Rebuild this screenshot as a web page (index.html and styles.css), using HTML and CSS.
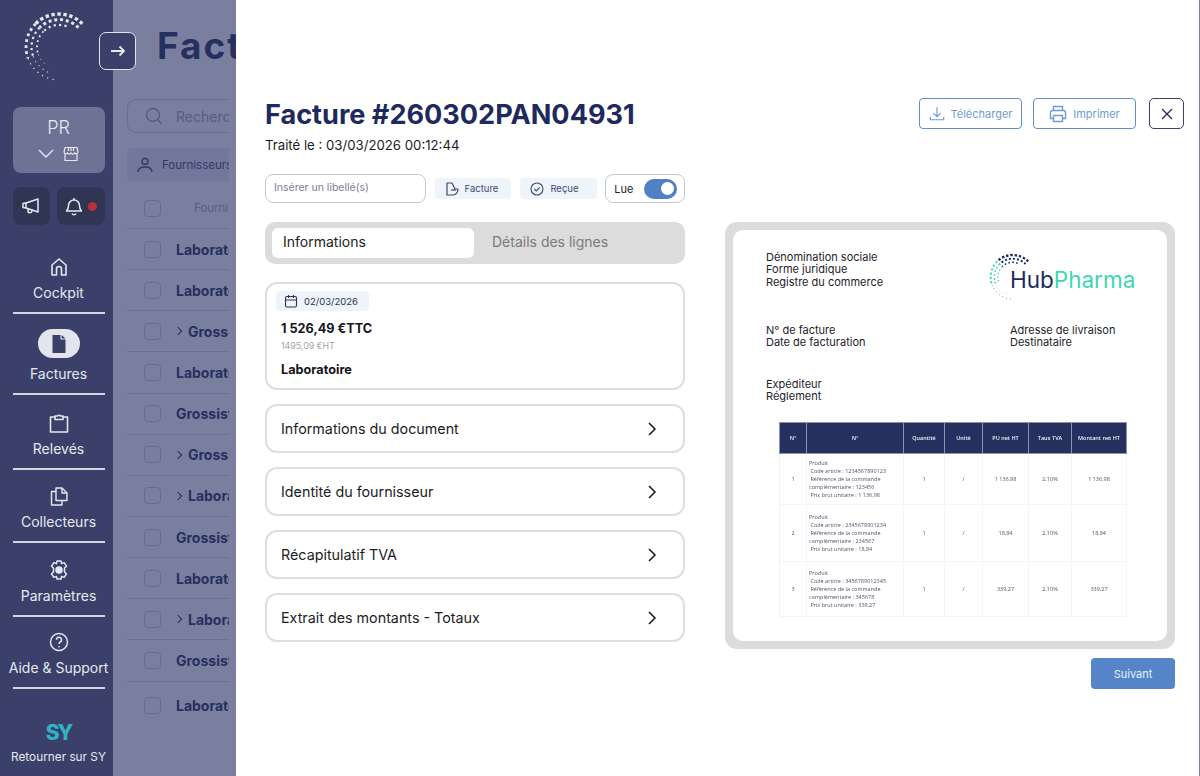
FILE: index.html
```html
<!DOCTYPE html>
<html lang="fr">
<head>
    <meta charset="utf-8">
    <title>Facture #260302PAN04931</title>
    <link rel="stylesheet" href="styles.css">
</head>
<body>
    <div class="app">
        <!-- Sidebar -->
        <aside class="sidebar">
            <svg class="brand-logo" viewBox="0 0 66 74" fill="none" stroke="#e6e8f0">
                <path d="M60.3 13.7A33 33 0 0 0 13.7 13.7" stroke-width="3.4" stroke-dasharray="3.4 2.6"/>
                <path d="M13.7 13.7A33 33 0 0 0 6 48.3" stroke-width="2.8" stroke-dasharray="2.8 3.2"/>
                <path d="M6 48.3A33 33 0 0 0 34.1 69.9" stroke-width="1.2" stroke-dasharray="1.2 4.4"/>
                <path d="M56.4 17.6A27.5 27.5 0 0 0 17.6 17.6" stroke-width="3" stroke-dasharray="3 2.8"/>
                <path d="M17.6 17.6A27.5 27.5 0 0 0 11.2 46.4" stroke-width="2.2" stroke-dasharray="2.2 3.4"/>
                <path d="M11.2 46.4A27.5 27.5 0 0 0 27.6 62.8" stroke-width="1.1" stroke-dasharray="1.1 4.2"/>
                <path d="M44.5 16.3A22 22 0 0 0 21.4 21.4" stroke-width="2.2" stroke-dasharray="2.2 3.2"/>
                <path d="M21.4 21.4A22 22 0 0 0 16.3 44.5" stroke-width="1.8" stroke-dasharray="1.8 3.4"/>
                <path d="M16.3 44.5A22 22 0 0 0 24.4 55" stroke-width="1" stroke-dasharray="1 4"/>
            </svg>

            <div class="account">
                <span class="account-initials">PR</span>
                <div class="account-icons">
                    <svg class="icon-16" viewBox="0 0 16 16" fill="none" stroke="currentColor" stroke-width="1.4"><path d="M1 4l7 7 7-7"/></svg>
                    <svg class="icon-16" viewBox="0 0 16 16" fill="none" stroke="currentColor" stroke-width="1.2"><path d="M1 6l1-4.5h12L15 6a2 2 0 0 1-3.5 1 2 2 0 0 1-3.5 0 2 2 0 0 1-3.5 0A2 2 0 0 1 1 6z"/><path d="M2 7.5V14.5h12V7.5M5.5 2v3M8 2v3M10.5 2v3"/></svg>
                </div>
            </div>

            <div class="quick-actions">
                <button type="button" class="quick-btn quick-btn-small">
                    <svg class="icon-20" viewBox="0 0 20 20" fill="none" stroke="currentColor" stroke-width="1.5" stroke-linejoin="round"><path d="M2 7.5v4l3 .5V7z"/><path d="M5 7l12-4v13L5 12"/><path d="M7 12.5v2a2 2 0 0 0 4 .5v-1.500"/></svg>
                </button>
                <button type="button" class="quick-btn quick-btn-wide">
                    <svg class="icon-20" viewBox="0 0 20 20" fill="none" stroke="currentColor" stroke-width="1.5" stroke-linejoin="round"><path d="M2.500 15c1.500-1.500 2-3 2-5.500a5.500 5.500 0 0 1 11 0c0 2.500.5 4 2 5.500z"/><path d="M8 17.500a2.200 2.200 0 0 0 4 0M10 2v2"/></svg>
                    <span class="alert-dot"></span>
                </button>
            </div>

            <nav class="nav">
                <a class="nav-item">
                    <svg class="icon-20" viewBox="0 0 20 20" fill="none" stroke="currentColor" stroke-width="1.6" stroke-linejoin="round"><path d="M3 18V8l7-6 7 6v10h-4.500v-6a2.500 2.500 0 0 0-5 0v6z"/></svg>
                    <span>Cockpit</span>
                </a>
                <a class="nav-item">
                    <span class="nav-pill">
                        <svg class="icon-20" viewBox="0 0 20 20" fill="#3a4069"><path d="M3.500 1h8v4.500h5V19h-13z"/><path d="M12.700 1l3.800 3.400h-3.800z"/></svg>
                    </span>
                    <span>Factures</span>
                </a>
                <a class="nav-item">
                    <svg class="icon-20" viewBox="0 0 20 20" fill="none" stroke="currentColor" stroke-width="1.6" stroke-linejoin="round"><path d="M6 4H1.500v15h17V4H14"/><path d="M6 6.500V3h2.800a1.300 1.300 0 0 1 2.400 0H14v3.500z"/></svg>
                    <span>Relevés</span>
                </a>
                <a class="nav-item">
                    <svg class="icon-20" viewBox="0 0 20 20" fill="none" stroke="currentColor" stroke-width="1.4" stroke-linejoin="round"><path d="M7 14.500V2h6l5 5v7.500z"/><path d="M13 2v5h5"/><path d="M7 5.500H2.500V19H13v-4.500"/></svg>
                    <span>Collecteurs</span>
                </a>
                <a class="nav-item">
                    <svg class="icon-20" viewBox="0 0 20 20" fill="none" stroke="currentColor" stroke-width="1.5" stroke-linejoin="round"><path d="M8 1h4l.6 2.600 2.500-1 2.400 3.600-2 1.800v4l2 1.800-2.400 3.600-2.500-1L12 19H8l-.6-2.600-2.500 1-2.400-3.600 2-1.800V8l-2-1.800 2.400-3.600 2.500 1z"/><circle cx="10" cy="10" r="3" fill="currentColor"/></svg>
                    <span>Paramètres</span>
                </a>
                <a class="nav-item">
                    <svg class="icon-20" viewBox="0 0 20 20" fill="none" stroke="currentColor" stroke-width="1.5"><circle cx="10" cy="10" r="8.500"/><path d="M7.500 7.800a2.500 2.500 0 1 1 3.700 2.200c-.8.500-1.200 1-1.200 2"/><path d="M10 14v1.200"/></svg>
                    <span>Aide &amp; Support</span>
                </a>
            </nav>

            <a class="back-link">
                <span class="sy-logo">SY</span>
                <span>Retourner sur SY</span>
            </a>
        </aside>

        <button type="button" class="expand-btn">
            <svg viewBox="0 0 16 16" width="16" height="16" fill="none" stroke="currentColor" stroke-width="1.8"><path d="M1 8h13M9.500 3.500L14 8l-4.500 4.500"/></svg>
        </button>

        <!-- Invoice list behind the panel -->
        <main class="list-page">
            <h2 class="list-title">Factures</h2>
            <div class="list-body">
                <div class="search">
                    <svg viewBox="0 0 20 20" width="20" height="20" fill="none" stroke="currentColor" stroke-width="1.4"><circle cx="9" cy="9" r="6.500"/><path d="M13.800 13.800L18 18"/></svg>
                    <span>Rechercher</span>
                </div>
                <div class="filter-chip">
                    <svg viewBox="0 0 18 18" width="18" height="18" fill="none" stroke="currentColor" stroke-width="1.4"><circle cx="9" cy="5.500" r="3"/><path d="M2 16c0-3.500 3-5 7-5s7 1.500 7 5"/></svg>
                    <span>Fournisseurs</span>
                </div>
                <div class="row row-head"><span class="checkbox"></span><span class="col-head">Fournisseur</span></div>
                <div class="row"><span class="checkbox"></span><b>Laboratoire</b></div>
                <div class="row"><span class="checkbox"></span><b>Laboratoire</b></div>
                <div class="row"><span class="checkbox"></span><i class="caret"></i><b>Grossiste</b></div>
                <div class="row"><span class="checkbox"></span><b>Laboratoire</b></div>
                <div class="row"><span class="checkbox"></span><b>Grossiste</b></div>
                <div class="row"><span class="checkbox"></span><i class="caret"></i><b>Grossiste</b></div>
                <div class="row"><span class="checkbox"></span><i class="caret"></i><b>Laboratoire</b></div>
                <div class="row"><span class="checkbox"></span><b>Grossiste</b></div>
                <div class="row"><span class="checkbox"></span><b>Laboratoire</b></div>
                <div class="row"><span class="checkbox"></span><i class="caret"></i><b>Laboratoire</b></div>
                <div class="row"><span class="checkbox"></span><b>Grossiste</b></div>
                <div class="row row-last"><span class="checkbox"></span><b>Laboratoire</b></div>
            </div>
        </main>

        <!-- Invoice panel -->
        <section class="panel">
            <header class="panel-header">
                <div>
                    <h1 class="panel-title">Facture #260302PAN04931</h1>
                    <p class="panel-sub">Traité le : 03/03/2026 00:12:44</p>
                </div>
                <div class="panel-actions">
                    <button type="button" class="outline-btn">
                        <svg viewBox="0 0 18 18" width="16" height="16" fill="none" stroke="currentColor" stroke-width="1.3"><path d="M9 1.500v10M5 8l4 4 4-4M1.500 12v3.500h15V12"/></svg>
                        Télécharger
                    </button>
                    <button type="button" class="outline-btn">
                        <svg viewBox="0 0 18 18" width="18" height="18" fill="none" stroke="currentColor" stroke-width="1.4" stroke-linejoin="round"><path d="M4.500 5.500V1.500h9v4"/><path d="M4.500 13.500h-3v-6a2 2 0 0 1 2-2h11a2 2 0 0 1 2 2v6h-3"/><path d="M4.500 10.500h9v6h-9z"/></svg>
                        Imprimer
                    </button>
                    <button type="button" class="close-btn">
                        <svg viewBox="0 0 12 12" width="12" height="12" fill="none" stroke="currentColor" stroke-width="1.3"><path d="M1 1l10 10M11 1L1 11"/></svg>
                    </button>
                </div>
            </header>

            <div class="toolbar">
                <div class="label-input">Insérer un libellé(s)</div>
                <span class="tag tag-first">
                    <svg viewBox="0 0 14 14" width="14" height="14" fill="none" stroke="currentColor" stroke-width="1.2" stroke-linejoin="round"><path d="M2 13V1h5l3 6h3c0 3-2 6-5 6z"/><path d="M6 8h5"/></svg>
                    Facture
                </span>
                <span class="tag">
                    <svg viewBox="0 0 14 14" width="14" height="14" fill="none" stroke="currentColor" stroke-width="1.1"><circle cx="7" cy="7" r="6"/><path d="M4.300 7l2 2 3.500-3.600"/></svg>
                    Reçue
                </span>
                <div class="read-toggle">
                    <span>Lue</span>
                    <span class="switch"><span class="switch-knob"></span></span>
                </div>
            </div>

            <div class="columns">
                <div class="col-left">
                    <div class="tabs">
                        <span class="tab tab-active">Informations</span>
                        <span class="tab">Détails des lignes</span>
                    </div>

                    <div class="summary-card">
                        <span class="date-chip">
                            <svg viewBox="0 0 14 14" width="14" height="14" fill="none" stroke="currentColor" stroke-width="1.1"><rect x="1.500" y="2.500" width="11" height="10.500" rx="1.500"/><path d="M1.500 6h11M4.500 1v3M9.500 1v3"/></svg>
                            02/03/2026
                        </span>
                        <div class="amount">1 526,49 €TTC</div>
                        <div class="amount-ht">1495,09 €HT</div>
                        <div class="supplier-type">Laboratoire</div>
                    </div>

                    <div class="accordion">Informations du document<svg viewBox="0 0 10 16" width="10" height="16" fill="none" stroke="currentColor" stroke-width="1.5"><path d="M2 2l6 6-6 6"/></svg></div>
                    <div class="accordion">Identité du fournisseur<svg viewBox="0 0 10 16" width="10" height="16" fill="none" stroke="currentColor" stroke-width="1.5"><path d="M2 2l6 6-6 6"/></svg></div>
                    <div class="accordion">Récapitulatif TVA<svg viewBox="0 0 10 16" width="10" height="16" fill="none" stroke="currentColor" stroke-width="1.5"><path d="M2 2l6 6-6 6"/></svg></div>
                    <div class="accordion">Extrait des montants - Totaux<svg viewBox="0 0 10 16" width="10" height="16" fill="none" stroke="currentColor" stroke-width="1.5"><path d="M2 2l6 6-6 6"/></svg></div>
                </div>

                <div class="col-right">
                    <div class="doc-frame">
                        <div class="doc-page">
                            <div class="doc-top">
                                <p class="doc-lines">Dénomination sociale<br>Forme juridique<br>Registre du commerce</p>
                                <div class="hub-logo">
                                    <svg class="hub-dots" viewBox="0 0 66 74" fill="none">
                                        <path d="M60.3 13.7A33 33 0 0 0 13.7 13.7" stroke="#1d2a5c" stroke-width="3.6" stroke-dasharray="3.6 2.8"/>
                                        <path d="M13.7 13.7A33 33 0 0 0 6 48.3" stroke="#3ed6b5" stroke-width="3" stroke-dasharray="3 3.4"/>
                                        <path d="M6 48.3A33 33 0 0 0 34.1 69.9" stroke="#7d86a8" stroke-width="1.5" stroke-dasharray="1.5 4.5"/>
                                        <path d="M56.4 17.6A27.5 27.5 0 0 0 17.6 17.6" stroke="#1d2a5c" stroke-width="3" stroke-dasharray="3 3"/>
                                        <path d="M17.6 17.6A27.5 27.5 0 0 0 11.2 46.4" stroke="#3ed6b5" stroke-width="2.4" stroke-dasharray="2.4 3.4"/>
                                        <path d="M11.2 46.4A27.5 27.5 0 0 0 27.6 62.8" stroke="#8ee8d3" stroke-width="1.4" stroke-dasharray="1.4 4.2"/>
                                        <path d="M44.5 16.3A22 22 0 0 0 21.4 21.4" stroke="#1d2a5c" stroke-width="2.4" stroke-dasharray="2.4 3.4"/>
                                        <path d="M21.4 21.4A22 22 0 0 0 16.3 44.5" stroke="#3ed6b5" stroke-width="2" stroke-dasharray="2 3.4"/>
                                    </svg>
                                    <span class="hub-word"><span class="hub-navy">Hub</span><span class="hub-teal">Pharma</span></span>
                                </div>
                            </div>
                            <div class="doc-mid">
                                <p class="doc-lines">N° de facture<br>Date de facturation</p>
                                <p class="doc-lines doc-ship">Adresse de livraison<br>Destinataire</p>
                            </div>
                            <p class="doc-lines doc-sender">Expéditeur<br>Réglement</p>

                            <table class="doc-table">
                                <thead>
                                    <tr>
                                        <th class="w-num">N°</th>
                                        <th class="w-desc">N°</th>
                                        <th class="w-qty">Quantité</th>
                                        <th class="w-unit">Unité</th>
                                        <th class="w-pu">PU net HT</th>
                                        <th class="w-tva">Taux TVA</th>
                                        <th class="w-total">Montant net HT</th>
                                    </tr>
                                </thead>
                                <tbody>
                                    <tr class="tr-first">
                                        <td>1</td>
                                        <td class="desc">Produit<br>&nbsp;Code article : 1234567890123<br>&nbsp;Référence de la commande complémentaire : 123456<br>&nbsp;Prix brut unitaire : 1 136,98</td>
                                        <td>1</td><td>/</td><td>1 136,98</td><td>2,10%</td><td>1 136,98</td>
                                    </tr>
                                    <tr class="tr-second">
                                        <td>2</td>
                                        <td class="desc">Produit<br>&nbsp;Code article : 2345678901234<br>&nbsp;Référence de la commande complémentaire : 234567<br>&nbsp;Prix brut unitaire : 18,84</td>
                                        <td>1</td><td>/</td><td>18,84</td><td>2,10%</td><td>18,84</td>
                                    </tr>
                                    <tr class="tr-third">
                                        <td>3</td>
                                        <td class="desc">Produit<br>&nbsp;Code article : 3456789012345<br>&nbsp;Référence de la commande complémentaire : 345678<br>&nbsp;Prix brut unitaire : 339,27</td>
                                        <td>1</td><td>/</td><td>339,27</td><td>2,10%</td><td>339,27</td>
                                    </tr>
                                </tbody>
                            </table>
                        </div>
                    </div>
                    <button type="button" class="next-btn">Suivant</button>
                </div>
            </div>
        </section>
    </div>
</body>
</html>
```

FILE: styles.css
```css
* {
    box-sizing: border-box;
}

html, body {
    margin: 0;
    height: 100%;
}

body {
    font-family: Inter, "Liberation Sans", sans-serif;
    background: #7b7f9f;
    overflow: hidden;
}

p, h1, h2 {
    margin: 0;
}

button {
    font-family: inherit;
    cursor: pointer;
}

.app {
    position: relative;
    display: flex;
    width: 1200px;
    height: 776px;
    overflow: hidden;
}

.icon-16 {
    width: 16px;
    height: 16px;
}

.icon-20 {
    width: 20px;
    height: 20px;
}

/* Sidebar */
.sidebar {
    flex: none;
    width: 113px;
    height: 776px;
    background: #3a4069;
    color: #e6e8f0;
    display: flex;
    flex-direction: column;
    align-items: center;
    padding-left: 4px;
}

.brand-logo {
    flex: none;
    width: 66px;
    height: 74px;
    margin: 10px 7px 23px 0;
}

.account {
    flex: none;
    width: 92px;
    height: 66px;
    background: #6e7396;
    border-radius: 8px;
    display: flex;
    flex-direction: column;
    align-items: center;
    padding-top: 9px;
}

.account-initials {
    font-size: 18px;
    line-height: 24px;
    font-weight: 300;
}

.account-icons {
    display: flex;
    align-items: center;
    gap: 9px;
    margin-top: 6px;
}

.quick-actions {
    flex: none;
    width: 92px;
    display: flex;
    gap: 7px;
    margin-top: 14px;
}

.quick-btn {
    height: 38px;
    background: #2f3553;
    border: none;
    border-radius: 8px;
    color: #e6e8f0;
    display: flex;
    align-items: center;
    justify-content: center;
    gap: 4px;
    padding: 0;
}

.quick-btn-small {
    width: 37px;
}

.quick-btn-wide {
    width: 48px;
}

.alert-dot {
    width: 9px;
    height: 9px;
    border-radius: 50%;
    background: #b93238;
}

.nav {
    flex: none;
    width: 92px;
    display: grid;
    grid-template-columns: 92px;
    grid-template-rows: 61px 81px 75px 73px 74px 72px;
    margin-top: 28px;
}

.nav-item {
    display: flex;
    flex-direction: column;
    align-items: center;
    justify-content: flex-end;
    gap: 6px;
    padding-bottom: 9px;
    border-bottom: 2px solid #d3d5e0;
    font-size: 14px;
    line-height: 20px;
    white-space: nowrap;
}

.nav-pill {
    width: 42px;
    height: 29px;
    border-radius: 15px;
    background: #e3e4ec;
    display: flex;
    align-items: center;
    justify-content: center;
}

.back-link {
    margin-top: 32px;
    display: flex;
    flex-direction: column;
    align-items: center;
    gap: 4px;
    font-size: 11.8px;
    line-height: 16px;
    white-space: nowrap;
}

.sy-logo {
    font-size: 21px;
    line-height: 24px;
    font-weight: 800;
    letter-spacing: -2px;
    color: #2fb3c6;
}

.expand-btn {
    position: absolute;
    left: 99px;
    top: 32px;
    width: 37px;
    height: 38px;
    background: #3a4069;
    border: 1.5px solid #e3e4ec;
    border-radius: 7px;
    color: #e6e8f0;
    display: flex;
    align-items: center;
    justify-content: center;
    padding: 0;
}

/* List behind the panel */
.list-page {
    width: 123px;
    padding-left: 14px;
    color: #25305f;
    overflow: hidden;
}

.list-title {
    font-size: 37px;
    line-height: 44px;
    font-weight: 700;
    letter-spacing: 2px;
    margin: 24px 0 0 30px;
    white-space: nowrap;
}

.list-body {
    width: 102px;
    overflow: hidden;
}

.search {
    width: 140px;
    height: 34px;
    margin-top: 31px;
    border: 1.5px solid #686d92;
    border-radius: 9px;
    display: flex;
    align-items: center;
    gap: 12px;
    padding-left: 16px;
    font-size: 14px;
    color: #565b82;
    white-space: nowrap;
}

.filter-chip {
    width: 140px;
    height: 33px;
    margin-top: 15px;
    background: #72779b;
    border-radius: 5px;
    display: flex;
    align-items: center;
    gap: 8px;
    padding-left: 9px;
    font-size: 11.5px;
    color: #303a68;
    white-space: nowrap;
}

.row {
    width: 140px;
    height: 41.15px;
    display: flex;
    align-items: center;
    padding-left: 17px;
    border-bottom: 1px solid #6c7193;
    font-size: 14px;
    white-space: nowrap;
}

.row-head {
    height: 48px;
    padding-top: 7px;
}

.row-last {
    border-bottom: none;
    height: 47px;
}

.row b {
    margin-left: 15px;
    font-weight: 700;
}

.row .caret + b {
    margin-left: 7px;
}

.col-head {
    margin-left: 33px;
    font-size: 11.5px;
    color: #585d85;
}

.checkbox {
    flex: none;
    width: 17px;
    height: 17px;
    border: 1.5px solid #666b90;
    border-radius: 4px;
}

.caret {
    flex: none;
    width: 6px;
    height: 6px;
    margin-left: 14px;
    border-top: 1.2px solid #25305f;
    border-right: 1.2px solid #25305f;
    transform: rotate(45deg);
}

/* Invoice panel */
.panel {
    position: absolute;
    left: 236px;
    top: 0;
    right: 1px;
    bottom: 0;
    background: #fff;
    padding: 98px 15px 0 29px;
}

.panel-header {
    display: flex;
    justify-content: space-between;
    align-items: flex-start;
}

.panel-title {
    font-size: 27.1px;
    line-height: 34px;
    font-weight: 700;
    color: #1e2a5e;
}

.panel-sub {
    font-size: 13.2px;
    line-height: 18px;
    margin-top: 4px;
    color: #1c1c24;
}

.panel-actions {
    display: flex;
    gap: 11px;
}

.outline-btn {
    width: 103px;
    height: 31px;
    background: #fff;
    border: 1.5px solid #5e8fd0;
    border-radius: 4px;
    color: #6f9bd4;
    font-size: 11px;
    display: flex;
    align-items: center;
    justify-content: center;
    gap: 6px;
    padding: 0;
}

.close-btn {
    width: 35px;
    height: 31px;
    margin-left: 2px;
    background: #fff;
    border: 1.5px solid #3a4069;
    border-radius: 5px;
    color: #1e2a5e;
    display: flex;
    align-items: center;
    justify-content: center;
    padding: 0;
}

.toolbar {
    display: flex;
    align-items: center;
    margin-top: 20px;
    width: 420px;
}

.label-input {
    width: 161px;
    height: 29px;
    border: 1.5px solid #c6c7d6;
    border-radius: 8px;
    font-size: 10.5px;
    line-height: 26px;
    padding-left: 8px;
    color: #7d8093;
}

.tag {
    width: 77px;
    height: 21px;
    margin-left: 9px;
    background: #eff3fa;
    border-radius: 4px;
    display: flex;
    align-items: center;
    gap: 6px;
    padding-left: 10px;
    font-size: 9.5px;
    color: #3f4a70;
}

.read-toggle {
    width: 80px;
    height: 29px;
    margin-left: 8px;
    border: 1.5px solid #c6c7d6;
    border-radius: 8px;
    display: flex;
    align-items: center;
    justify-content: space-between;
    padding: 0 7px 0 8px;
    font-size: 11px;
    color: #1c1c24;
}

.switch {
    width: 33px;
    height: 20px;
    border-radius: 10px;
    background: #4f81c4;
    display: flex;
    align-items: center;
    justify-content: flex-end;
    padding-right: 3px;
}

.switch-knob {
    width: 13px;
    height: 13px;
    border-radius: 50%;
    background: #fff;
}

.columns {
    display: grid;
    grid-template-columns: 420px 450px;
    column-gap: 40px;
    margin-top: 19px;
}

.col-left {
    display: flex;
    flex-direction: column;
}

.tabs {
    height: 42px;
    background: #dcdcdc;
    border-radius: 10px;
    display: flex;
    align-items: center;
    padding: 0 7px;
}

.tab {
    width: 202px;
    height: 30px;
    font-size: 14px;
    line-height: 28px;
    padding-left: 11px;
    color: #7a7a80;
}

.tab + .tab {
    padding-left: 18px;
}

.tab-active {
    background: #fff;
    border-radius: 6px;
    color: #1c1c24;
}

.summary-card {
    height: 108px;
    margin-top: 18px;
    border: 2px solid #dedede;
    border-radius: 12px;
    padding: 7px 0 0 9px;
}

.date-chip {
    width: 93px;
    height: 20px;
    background: #eff3fa;
    border-radius: 4px;
    display: flex;
    align-items: center;
    gap: 6px;
    padding-left: 8px;
    font-size: 9.5px;
    color: #2c3350;
}

.amount {
    margin: 10px 0 0 5px;
    font-size: 12.7px;
    line-height: 16px;
    font-weight: 700;
    color: #15151c;
}

.amount-ht {
    margin: 3px 0 0 5px;
    font-size: 8.8px;
    line-height: 12px;
    color: #a3a3a8;
}

.supplier-type {
    margin: 10px 0 0 5px;
    font-size: 12.7px;
    line-height: 16px;
    font-weight: 700;
    color: #15151c;
}

.accordion {
    height: 49px;
    margin-top: 14px;
    border: 2px solid #dedede;
    border-radius: 12px;
    display: flex;
    align-items: center;
    justify-content: space-between;
    padding: 0 26px 0 14px;
    font-size: 14.3px;
    color: #1c1c24;
}

.accordion svg {
    color: #15151c;
}

.col-right {
    display: flex;
    flex-direction: column;
    align-items: flex-end;
}

.doc-frame {
    width: 450px;
    height: 427px;
    background: #dcdcdc;
    border-radius: 12px;
    padding: 8px;
}

.doc-page {
    height: 411px;
    background: #fff;
    border-radius: 10px;
    padding: 21px 0 0 33px;
}

.doc-lines {
    font-size: 11px;
    line-height: 12.3px;
    color: #23232b;
}

.doc-top {
    display: flex;
    justify-content: space-between;
    height: 73px;
}

.hub-logo {
    position: relative;
    width: 147px;
    height: 50px;
    margin: 1px 32px 0 0;
}

.hub-dots {
    position: absolute;
    left: 0;
    top: 0;
    width: 44px;
    height: 50px;
}

.hub-word {
    position: absolute;
    left: 22px;
    top: 14px;
    font-size: 22.5px;
    line-height: 28px;
    white-space: nowrap;
}

.hub-navy {
    color: #1d2a5c;
}

.hub-teal {
    color: #3ed6b5;
}

.doc-mid {
    display: flex;
    height: 54px;
}

.doc-mid .doc-lines:first-child {
    width: 244px;
}

.doc-sender {
    height: 38px;
}

.doc-table {
    width: 347px;
    margin: 6px 0 0 13px;
    border-collapse: collapse;
    table-layout: fixed;
    font-family: "Open Sans", sans-serif;
    font-size: 5.5px;
    line-height: 8px;
    color: #50526a;
    filter: blur(0.25px);
}

.doc-table th {
    height: 31px;
    background: #25305f;
    color: #f0f1f7;
    font-weight: 600;
    border: 1px solid #8d92ad;
    padding: 0;
    white-space: nowrap;
}

.doc-table td {
    border: 1px solid #f4f4f6;
    text-align: center;
    padding: 0;
}

.doc-table td.desc {
    text-align: left;
    padding-left: 2px;
}

.tr-first {
    height: 51px;
}

.tr-second {
    height: 57px;
}

.tr-third {
    height: 55px;
}

.w-num { width: 27px; }
.w-desc { width: 97px; }
.w-qty { width: 41px; }
.w-unit { width: 38px; }
.w-pu { width: 46px; }
.w-tva { width: 43px; }
.w-total { width: 55px; }

.next-btn {
    width: 84px;
    height: 31px;
    margin-top: 9px;
    background: #5585c8;
    border: none;
    border-radius: 4px;
    color: #e8eef8;
    font-size: 11px;
}
```
